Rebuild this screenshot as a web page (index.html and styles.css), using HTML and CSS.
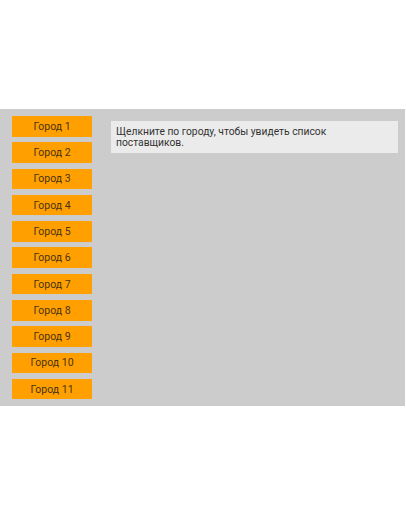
FILE: index.html
```html
<!DOCTYPE html>
<html>
<head>
<meta charset="utf-8">
<link rel="stylesheet" href="styles.css">
</head>
<body>
<div class="app">
  <div class="cities">
    <div class="city">Город 1</div>
    <div class="city">Город 2</div>
    <div class="city">Город 3</div>
    <div class="city">Город 4</div>
    <div class="city">Город 5</div>
    <div class="city">Город 6</div>
    <div class="city">Город 7</div>
    <div class="city">Город 8</div>
    <div class="city">Город 9</div>
    <div class="city">Город 10</div>
    <div class="city">Город 11</div>
  </div>
  <div class="content">
    <div class="info">Щелкните по городу, чтобы увидеть список поставщиков.</div>
  </div>
</div>
</body>
</html>
```
FILE: styles.css
```css
html, body {
  margin: 0;
  padding: 0;
  background: #ffffff;
}
body {
  padding-top: 109px;
  font-family: Roboto, "Noto Sans", sans-serif;
}
.app {
  width: 405px;
  height: 297px;
  background: #cccccc;
  display: flex;
  box-sizing: border-box;
}
.cities {
  padding: 7px 0 0 12px;
  display: flex;
  flex-direction: column;
  gap: 5.8px;
}
.city {
  width: 80px;
  height: 20.5px;
  background: #ffa000;
  color: #4a3410;
  font-size: 10.5px;
  display: flex;
  align-items: center;
  justify-content: center;
}
.content {
  flex: 1;
  padding: 12px 7px 0 19px;
}
.info {
  background: #ebebeb;
  color: #333333;
  font-size: 10.3px;
  line-height: 11px;
  padding: 5px 5px 5px 5px;
  height: 32px;
  box-sizing: border-box;
}
```
